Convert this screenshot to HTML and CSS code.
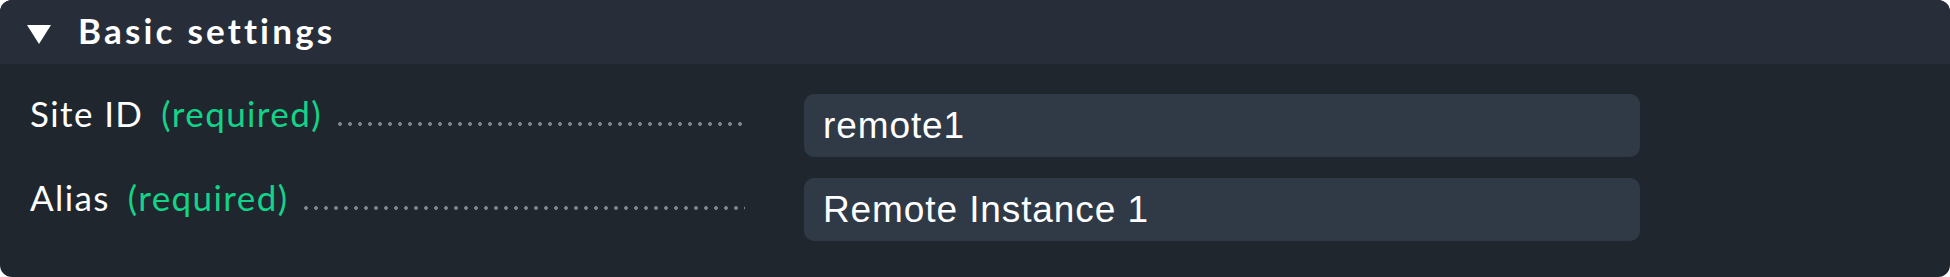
FILE: index.html
```html
<!DOCTYPE html>
<html lang="en">
<head>
<meta charset="utf-8">
<title>Basic settings</title>
<link rel="stylesheet" href="styles.css">
</head>
<body>
<section class="card">
  <header class="card-header">
    <svg class="toggle" viewBox="0 0 24 19" width="24" height="19" aria-hidden="true"><polygon points="0,0 24,0 12,19" fill="#ffffff"/></svg>
    <h2 class="title">Basic settings</h2>
  </header>
  <div class="card-body">
    <div class="row">
      <div class="label"><span class="name">Site ID</span><span class="req">(required)</span><span class="dots"></span></div>
      <div class="input">remote1</div>
    </div>
    <div class="row">
      <div class="label"><span class="name">Alias</span><span class="req">(required)</span><span class="dots"></span></div>
      <div class="input">Remote Instance 1</div>
    </div>
  </div>
</section>
</body>
</html>
```

FILE: styles.css
```css
html, body {
  margin: 0;
  padding: 0;
  background: #ffffff;
}

.card {
  width: 1950px;
  height: 277px;
  background: #20262e;
  border-radius: 12px;
  overflow: hidden;
  display: flex;
  flex-direction: column;
}

.card-header {
  height: 64px;
  flex: none;
  background: #272e39;
  display: flex;
  align-items: center;
  padding-left: 27px;
  box-sizing: border-box;
}

.toggle {
  display: block;
  margin-top: 5px;
}

.title {
  align-self: flex-start;
  margin: 0 0 0 27px;
  font-family: Lato, "Noto Sans", sans-serif;
  font-weight: 700;
  font-size: 35px;
  letter-spacing: 3.2px;
  color: #ffffff;
  line-height: 60px;
}

.card-body {
  padding: 30px 0 0 30px;
  display: flex;
  flex-direction: column;
  gap: 21px;
}

.row {
  display: flex;
  align-items: flex-start;
  height: 63px;
}

.label {
  width: 715px;
  flex: none;
  display: flex;
  align-items: baseline;
  font-family: Lato, "Noto Sans", sans-serif;
  font-size: 35px;
  line-height: 38px;
  letter-spacing: 1.4px;
  color: #ffffff;
  white-space: nowrap;
}

.req {
  margin-left: 18px;
  color: #13d389;
}

.dots {
  flex: 1;
  min-width: 0;
  height: 6px;
  margin-left: 13px;
  align-self: baseline;
  background-image: radial-gradient(circle at 5px 3px, #7d828a 1.7px, transparent 2.2px);
  background-size: 10px 6px;
  background-repeat: repeat-x;
}

.input {
  margin-left: 59px;
  width: 836px;
  height: 63px;
  flex: none;
  box-sizing: border-box;
  background: #303a47;
  border-radius: 10px;
  padding-left: 19px;
  display: flex;
  align-items: center;
  font-family: "Liberation Sans", Arial, sans-serif;
  font-size: 37px;
  letter-spacing: 0.9px;
  color: #ffffff;
}
```
